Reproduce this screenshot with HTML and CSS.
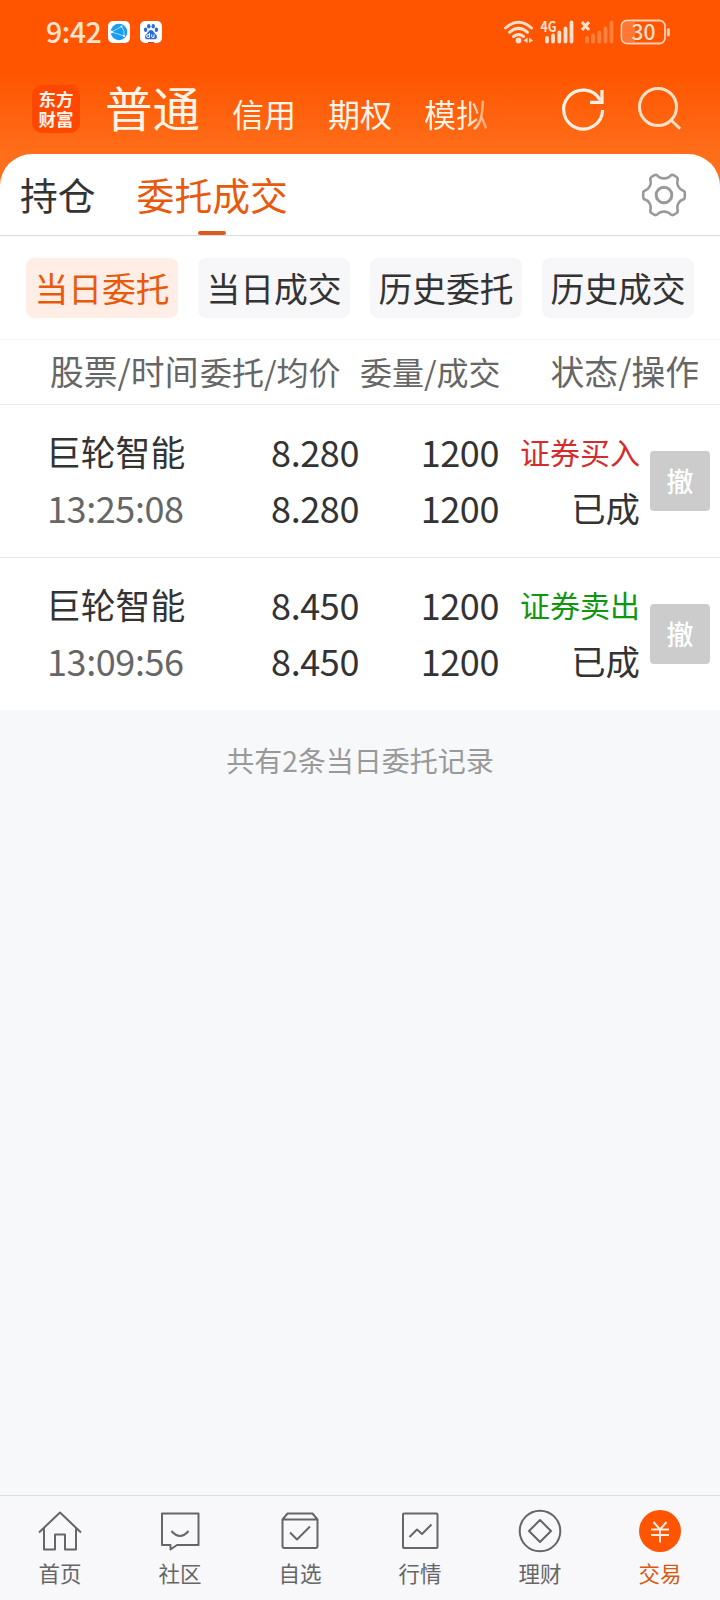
FILE: index.html
```html
<!DOCTYPE html>
<html lang="zh-CN">
<head>
    <meta charset="utf-8">
    <title>委托成交</title>
    <link rel="stylesheet" href="styles.css">
</head>
<body>
    <div class="app">

        <!-- Header -->
        <div class="header">
            <div class="status-bar">
                <span class="time">9:42</span>
                <svg class="app-icon" width="22" height="22" viewBox="0 0 22 22">
                    <rect width="22" height="22" rx="5" fill="#fff"/>
                    <circle cx="11" cy="11" r="8.3" fill="#1c9cf0"/>
                    <path d="M3.8 11L13.5 5.5M3.8 11L16 15M13.5 5.5Q17 10 16 15" fill="none" stroke="#8be4ff" stroke-width="1"/>
                    <circle cx="13.5" cy="5.5" r="1" fill="#fff"/>
                    <circle cx="3.8" cy="11" r="1.2" fill="#fff"/>
                    <circle cx="16" cy="15" r="1" fill="#fff"/>
                </svg>
                <svg class="app-icon second" width="22" height="22" viewBox="0 0 22 22">
                    <rect width="22" height="22" rx="5" fill="#fff"/>
                    <g fill="#2b6be0">
                        <ellipse cx="5.6" cy="8.8" rx="1.7" ry="2.2"/>
                        <ellipse cx="8.8" cy="5.2" rx="1.7" ry="2.2"/>
                        <ellipse cx="13.2" cy="5.2" rx="1.7" ry="2.2"/>
                        <ellipse cx="16.4" cy="8.8" rx="1.7" ry="2.2"/>
                        <path d="M11 9C13.5 9 14 12 15.6 13.2C18 15 17 18.3 14.5 18.3H7.5C5 18.3 4 15 6.4 13.2C8 12 8.5 9 11 9Z"/>
                    </g>
                    <path d="M9.5 12V16.5H8A1.4 1.4 0 0 1 8 13.7H9.5M11.7 13.5V15.5Q11.7 16.5 12.8 16.5H14V13.5" fill="none" stroke="#fff" stroke-width="1"/>
                    <rect x="8" y="21" width="6" height="1" fill="#e0304a"/>
                </svg>
                <div class="status-right">
                    <svg width="170" height="28" viewBox="502 18 170 28">
                        <g fill="none" stroke="#ffe0cc" stroke-width="3" stroke-linecap="round">
                            <path d="M505.5 28Q518.5 16.5 531.5 28"/>
                            <path d="M509.5 32.3Q518.5 24.5 527.5 32.3"/>
                            <path d="M513.5 36.5Q518.5 32.5 523.5 36.5"/>
                        </g>
                        <circle cx="518.5" cy="40.5" r="2.9" fill="#ffe0cc"/>
                        <path d="M523.5 40.5L527.5 37.5V43ZM529 37.5L533 40.5L529 43Z" fill="#ffe0cc"/>
                        <text class="net" x="540.5" y="32" textLength="16" lengthAdjust="spacingAndGlyphs">4G</text>
                        <path d="M547 38V41.5M553 35.5V41.5M559.3 32.5V41.5M565.5 28.5V41.5M571.5 22.5V41.5" stroke="#ffe0cc" stroke-width="3.8" stroke-linecap="round"/>
                        <path d="M582 22L589 30M589 22L582 30" stroke="#ffe0cc" stroke-width="3"/>
                        <path d="M587 38V41.5M593 35.5V41.5M599.3 32.5V41.5M605.5 28.5V41.5M611.5 22.5V41.5" stroke="#ff8140" stroke-width="3.8" stroke-linecap="round"/>
                        <path d="M635 22H627A4 4 0 0 0 623 26V38A4 4 0 0 0 627 42H635Z" fill="#ff7733"/>
                        <rect x="621.5" y="20.5" width="43.5" height="23" rx="5.5" fill="none" stroke="#ffcfb3" stroke-width="1.8"/>
                        <path d="M668.3 29.5V35" stroke="#ffcfb3" stroke-width="3" stroke-linecap="round"/>
                        <text class="battery" x="643.5" y="39.8" text-anchor="middle">30</text>
                    </svg>
                </div>
            </div>

            <div class="nav">
                <div class="logo"><span>东方</span><span>财富</span></div>
                <div class="accounts">
                    <a class="current">普通</a>
                    <a>信用</a>
                    <a>期权</a>
                    <a class="fade">模拟</a>
                </div>
                <div class="nav-icons">
                    <svg width="44" height="44" viewBox="561 87 44 44" fill="none" stroke="#fff0e2" stroke-width="3.2">
                        <path d="M602.6 110A19.5 19.5 0 1 1 600.2 100.2"/>
                        <path d="M602 90V102.3H590"/>
                    </svg>
                    <svg width="44" height="44" viewBox="638 87 44 44" fill="none" stroke="#ffe0c8" stroke-width="3">
                        <circle cx="658" cy="107" r="18.5"/>
                        <path d="M671 120L680 128.8"/>
                    </svg>
                </div>
            </div>
        </div>

        <!-- Page tabs -->
        <div class="panel">
            <div class="tabs">
                <a class="tab">持仓</a>
                <a class="tab active">委托成交</a>
                <svg class="gear" width="48" height="48" viewBox="-24 -24 48 48" fill="none" stroke="#999" stroke-width="2.6" stroke-linejoin="round">
                    <path d="M-5.5 -18.3Q-3.5 -16.6 0 -16.6Q3.5 -16.6 5.5 -18.3Q7.5 -20.8 9.5 -19.8L12.6 -18Q14.4 -16.8 13.4 -13.8Q12.8 -11 14.4 -8.3Q16 -5.5 18.8 -4.6Q20.8 -4.2 20.8 -2V2Q20.8 4.2 18.8 4.6Q16 5.5 14.4 8.3Q12.8 11 13.4 13.8Q14.4 16.8 12.6 18L9.5 19.8Q7.5 20.8 5.5 18.3Q3.5 16.6 0 16.6Q-3.5 16.6 -5.5 18.3Q-7.5 20.8 -9.5 19.8L-12.6 18Q-14.4 16.8 -13.4 13.8Q-12.8 11 -14.4 8.3Q-16 5.5 -18.8 4.6Q-20.8 4.2 -20.8 2V-2Q-20.8 -4.2 -18.8 -4.6Q-16 -5.5 -14.4 -8.3Q-12.8 -11 -13.4 -13.8Q-14.4 -16.8 -12.6 -18L-9.5 -19.8Q-7.5 -20.8 -5.5 -18.3Z"/>
                    <circle r="7.8" stroke-width="3"/>
                </svg>
            </div>

            <div class="filters">
                <a class="pill selected">当日委托</a>
                <a class="pill">当日成交</a>
                <a class="pill">历史委托</a>
                <a class="pill">历史成交</a>
            </div>

            <!-- Orders -->
            <div class="list-head">
                <span class="h-stock">股票/时间</span>
                <span class="h-price">委托/均价</span>
                <span class="h-amount">委量/成交</span>
                <span class="h-state">状态/操作</span>
            </div>

            <div class="order">
                <div class="col stock"><span>巨轮智能</span><span class="clock">13:25:08</span></div>
                <div class="col price"><span>8.280</span><span>8.280</span></div>
                <div class="col amount"><span>1200</span><span>1200</span></div>
                <div class="col state"><span class="buy">证券买入</span><span>已成</span></div>
                <a class="cancel">撤</a>
            </div>
            <div class="order">
                <div class="col stock"><span>巨轮智能</span><span class="clock">13:09:56</span></div>
                <div class="col price"><span>8.450</span><span>8.450</span></div>
                <div class="col amount"><span>1200</span><span>1200</span></div>
                <div class="col state"><span class="sell">证券卖出</span><span>已成</span></div>
                <a class="cancel">撤</a>
            </div>
        </div>

        <p class="summary">共有2条当日委托记录</p>

        <!-- Bottom bar -->
        <div class="tabbar">
            <a class="item">
                <svg width="44" height="44" viewBox="0 0 44 44">
                    <path d="M1 22.5L22 2.5L43 22.5M6 18.5V39.5H17V24.5H27V39.5H38V18.5"/>
                </svg>
                <span>首页</span>
            </a>
            <a class="item">
                <svg width="44" height="44" viewBox="0 0 44 44">
                    <path d="M4 3.5H40.5V35H19L12.5 39.5V35H4Z"/>
                    <path d="M13.5 21Q22 31 30.5 21"/>
                </svg>
                <span>社区</span>
            </a>
            <a class="item">
                <svg width="44" height="44" viewBox="0 0 44 44">
                    <path d="M4.5 9.5L9.5 3.5H34.5L39.5 9.5V36Q39.5 38 37.5 38H6.5Q4.5 38 4.5 36ZM4.5 9.5H39.5M12 22.5L19 29.5L32 16.5"/>
                </svg>
                <span>自选</span>
            </a>
            <a class="item">
                <svg width="44" height="44" viewBox="0 0 44 44">
                    <rect x="5" y="3.5" width="34.5" height="34.5" rx="1"/>
                    <path d="M11.5 27L19 19.5L24 24L33.5 14.5"/>
                </svg>
                <span>行情</span>
            </a>
            <a class="item">
                <svg width="44" height="44" viewBox="0 0 44 44">
                    <circle cx="22" cy="21" r="20.3"/>
                    <path d="M22 10L33 21L22 32L11 21Z"/>
                </svg>
                <span>理财</span>
            </a>
            <a class="item on">
                <svg width="44" height="44" viewBox="0 0 44 44">
                    <circle class="disc" cx="22" cy="21" r="21"/>
                    <path class="yen" d="M15.5 12L22 19.5L28.5 12M13 19.5H31M13 25H31M22 19.5V32.5"/>
                </svg>
                <span>交易</span>
            </a>
        </div>
    </div>
</body>
</html>
```

FILE: styles.css
```css
* {
    box-sizing: border-box;
}

body {
    margin: 0;
    font-family: "Noto Sans CJK SC", "Noto Sans", sans-serif;
    color: #333;
    background: #f7f8fa;
}

svg {
    display: block;
    flex: none;
    overflow: visible;
}

.app {
    display: flex;
    flex-direction: column;
    width: 720px;
    height: 1600px;
    overflow: hidden;
    white-space: nowrap;
}

/* Header */

.header {
    flex: none;
    height: 194px;
    background: linear-gradient(#ff5500 0, #ff5500 72px, #ff6e1a 154px, #ff6e1a 100%);
}

.status-bar {
    display: flex;
    align-items: center;
    height: 64px;
    padding: 0 48px 0 46px;
}

.time {
    width: 62px;
    padding-bottom: 2px;
    font-size: 28.5px;
    font-weight: 500;
    line-height: 62px;
    letter-spacing: -0.5px;
    color: #ffe3d0;
}

.app-icon.second {
    margin-left: 10px;
}

.status-right {
    margin-left: auto;
}

.net {
    font-size: 14px;
    font-weight: bold;
    fill: #ffe0cc;
}

.battery {
    font-size: 21px;
    font-weight: 500;
    fill: #ffe0cc;
}

.nav {
    display: flex;
    align-items: center;
    height: 90px;
    padding: 0 38px 0 32px;
}

.logo {
    display: flex;
    flex-direction: column;
    justify-content: center;
    width: 48px;
    height: 48px;
    padding-bottom: 1px;
    border-radius: 10px;
    background: #ff4700;
    color: #fff4ea;
    font-size: 17.5px;
    font-weight: bold;
    line-height: 20px;
    text-align: center;
}

.accounts {
    display: flex;
    align-items: baseline;
    gap: 32px;
    margin-left: 25px;
    padding-top: 2px;
    color: #fff4e8;
    font-size: 32px;
    line-height: 90px;
}

.accounts .current {
    font-size: 47.5px;
}

.accounts .fade {
    background: linear-gradient(90deg, #fff4e8 65%, #ffa066 100%);
    -webkit-background-clip: text;
    background-clip: text;
    color: transparent;
}

.nav-icons {
    display: flex;
    gap: 33px;
    margin-left: auto;
}

/* Tabs */

.panel {
    flex: none;
    margin-top: -40px;
    background: #fff;
    border-radius: 32px 32px 0 0;
}

.tabs {
    display: flex;
    align-items: center;
    height: 82px;
    padding: 0 32px 0 20px;
    border-bottom: 1px solid #ddd;
}

.tab {
    display: flex;
    flex-direction: column;
    align-items: center;
    height: 81px;
    margin-right: 41px;
    padding-top: 2px;
    font-size: 37.8px;
    line-height: 75px;
}

.tab.active {
    color: #e8590c;
}

.tab.active:after {
    content: "";
    width: 28px;
    height: 4px;
    border-radius: 2px;
    background: #dd5b1f;
}

.gear {
    margin-left: auto;
}

.filters {
    display: flex;
    gap: 20px;
    height: 104px;
    padding: 22px 26px;
    border-bottom: 1px solid #f2f2f2;
}

.pill {
    width: 152px;
    height: 60px;
    border-radius: 8px;
    background: #f7f7fa;
    font-size: 33.8px;
    line-height: 59px;
    text-align: center;
}

.pill.selected {
    background: #ffeee6;
    color: #e8590c;
}

/* Orders */

.list-head {
    display: flex;
    height: 65px;
    padding: 0 21px 0 50px;
    border-bottom: 1px solid #e8e8e8;
    color: #666;
    font-size: 32px;
    line-height: 62px;
}

.h-stock {
    width: 150px;
    font-size: 33.8px;
}

.h-price {
    width: 160px;
}

.h-state {
    margin-left: auto;
    font-size: 33.8px;
}

.order {
    display: flex;
    align-items: center;
    height: 153px;
    padding-right: 10px;
    border-bottom: 1px solid #e8e8e8;
}

.order:last-child {
    height: 152px;
    border-bottom: 0;
}

.col {
    display: flex;
    flex-direction: column;
    padding-bottom: 4px;
    line-height: 56px;
    text-align: right;
    font-size: 36px;
    letter-spacing: -0.4px;
}

.stock {
    width: 210px;
    padding-left: 46px;
    text-align: left;
    font-size: 34.8px;
    letter-spacing: 0;
}

.clock {
    padding-left: 1px;
    color: #666;
    font-size: 36px;
    letter-spacing: -0.4px;
}

.price {
    width: 149px;
}

.amount {
    width: 140px;
}

.state {
    width: 141px;
    font-size: 34.4px;
    letter-spacing: 0;
}

.state .buy,
.state .sell {
    font-size: 30px;
}

.buy {
    color: #d42c2c;
}

.sell {
    color: #109610;
}

.cancel {
    width: 60px;
    height: 60px;
    margin-left: auto;
    border-radius: 4px;
    background: #ccc;
    color: #fff;
    font-size: 27px;
    font-weight: 500;
    line-height: 60px;
    text-align: center;
}

.summary {
    margin: 29px 0 0;
    color: #999;
    font-size: 28px;
    line-height: 42px;
    text-align: center;
}

/* Bottom bar */

.tabbar {
    display: flex;
    height: 105px;
    margin-top: auto;
    border-top: 1px solid #dfe2e4;
    background: #f8f8fa;
}

.item {
    display: flex;
    flex-direction: column;
    align-items: center;
    width: 120px;
    padding-top: 14px;
    color: #666;
    font-size: 21.5px;
    line-height: 38px;
}

.item svg {
    fill: none;
    stroke: #666;
    stroke-width: 2;
    stroke-linejoin: round;
}

.item.on {
    color: #d9590f;
}

.item .disc {
    fill: #ff5500;
    stroke: none;
}

.item .yen {
    stroke: #ffeadd;
}
```
